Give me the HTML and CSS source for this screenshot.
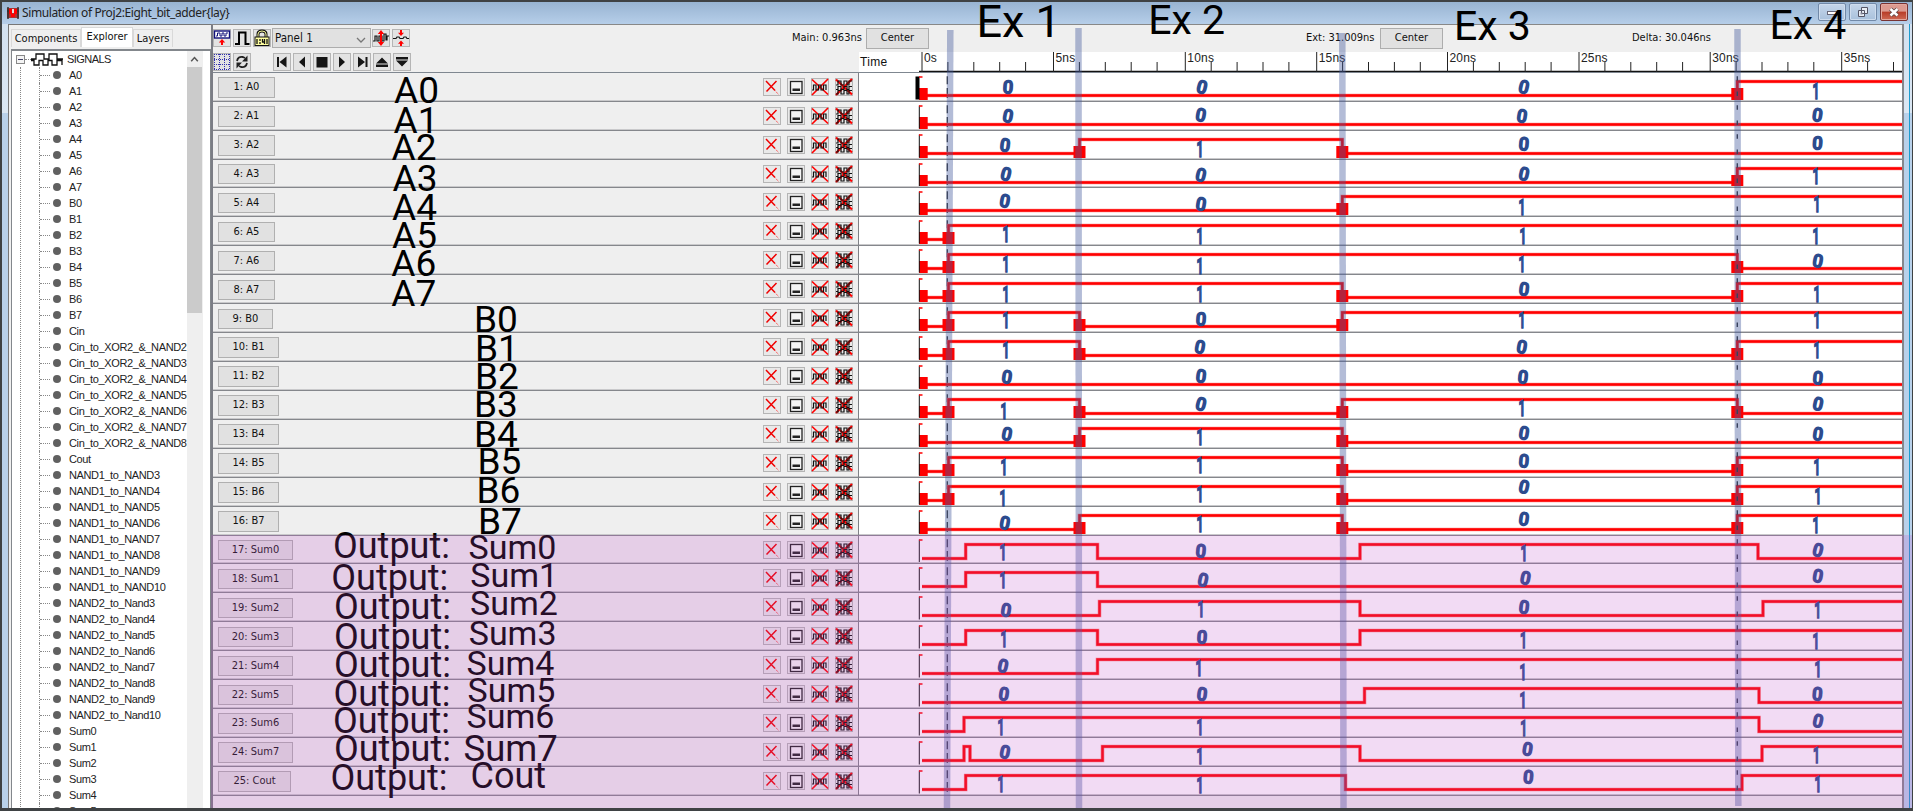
FILE: index.html
```html
<!DOCTYPE html>
<html lang="en">
<head>
<meta charset="utf-8">
<title>Simulation of Proj2:Eight_bit_adder{lay}</title>
<link rel="stylesheet" href="styles.css">
</head>
<body>
<svg class="defs" width="0" height="0">
  <symbol id="add-panel" viewBox="0 0 18 18"><rect x="1.500" y="2" width="15" height="7" fill="#fff" stroke="#10107a" stroke-width="1.4"/><path d="M3 7h1.500V4H7v3h2V4h2v3h2V4h2" fill="none" stroke="#10107a"/><path d="M9 10l3.200 3.500H10V16H8v-2.500H5.800z" fill="#f00"/></symbol>
  <symbol id="pulse" viewBox="0 0 18 18"><path d="M2 15h4V3.500h6.500V15h4" fill="none" stroke="#000" stroke-width="2"/></symbol>
  <symbol id="lock" viewBox="0 0 18 18"><path d="M5 9V5q0-3 4-3t4 3v4" fill="none" stroke="#111" stroke-width="3"/><path d="M5 8.500V5q0-3 4-3t4 3v3.500" fill="none" stroke="#ffffa0" stroke-width="1"/><rect x="2" y="8" width="14" height="8.500" fill="#ffffa0" stroke="#111"/><path d="M4 10v5M7 10v2M7 13v2M9.500 10v3h2M11.500 10v5M14 10v5" stroke="#111" stroke-width="1.300" fill="none"/></symbol>
  <symbol id="grow" viewBox="0 0 18 18"><path d="M1 12h2V7h2v5h2V7h3v5h2V5h2v6h1V7h2" fill="none" stroke="#111" stroke-width="1.200"/><path d="M9 1l3.200 4H10v8h2.200L9 17l-3.200-4H8V5H5.800z" fill="#f00"/></symbol>
  <symbol id="shrink" viewBox="0 0 18 18"><path d="M1 9.500h3l1-1.500h2l1 1.500h3l1-1.500h2l1 1.500h2" fill="none" stroke="#111" stroke-width="1.200"/><path d="M9 7L6 3.800h2V1h2v2.800h2zM9 11.500l3 3.200h-2V17H8v-2.300H6z" fill="#f00"/></symbol>
  <symbol id="grid" viewBox="0 0 18 18"><path d="M1 1.500h16M1 6.500h16M1 11.500h16M1 16.500h16M1.500 1v16M6.500 1v16M11.500 1v16M16.500 1v16" stroke="#3030b0" stroke-dasharray="1 1" fill="none"/></symbol>
  <symbol id="refresh" viewBox="0 0 18 18"><path d="M4 8q1-5 6-4l2 1M14 10q-1 5-6 4l-2-1" fill="none" stroke="#222" stroke-width="1.800"/><path d="M14.500 2.500v6H9zM3.500 15.500v-6H9z" fill="#222"/></symbol>
  <symbol id="first" viewBox="0 0 18 18"><path d="M4 4h2v10H4zM13.500 3.500v11L6.500 9z" fill="#151515"/></symbol>
  <symbol id="back" viewBox="0 0 18 18"><path d="M12 3.500v11L6 9z" fill="#151515"/></symbol>
  <symbol id="stop" viewBox="0 0 18 18"><rect x="3.500" y="4" width="11" height="10.500" fill="#151515"/></symbol>
  <symbol id="play" viewBox="0 0 18 18"><path d="M6 3.500v11L12 9z" fill="#151515"/></symbol>
  <symbol id="last" viewBox="0 0 18 18"><path d="M12.500 4h2v10h-2zM5 3.500v11L12 9z" fill="#151515"/></symbol>
  <symbol id="up" viewBox="0 0 18 18"><path d="M9 4.500l6 6H3zM3 11.500h12v2.500H3z" fill="#151515"/></symbol>
  <symbol id="down" viewBox="0 0 18 18"><path d="M9 13.500l-6-6h12zM3 4h12v2.500H3z" fill="#151515"/></symbol>
  <symbol id="close" viewBox="0 0 18 18"><path d="M3 3l9 9.500M13.500 3L3.500 13.500" stroke="#f00000" stroke-width="1.500" fill="none"/><path d="M12 12.500l3.500 4" stroke="#f33" stroke-dasharray="1 1" fill="none"/></symbol>
  <symbol id="minimize" viewBox="0 0 18 18"><rect x="3.500" y="3.500" width="11.500" height="12" fill="#f4f4f4" stroke="#222" stroke-width="1.300"/><rect x="5.500" y="10.500" width="7.500" height="2.500" fill="#222"/></symbol>
  <symbol id="remove" viewBox="0 0 18 18"><path d="M1 1.500l16 15M17 1L1 17" stroke="#f00" stroke-width="1.700"/><path d="M1 12h1.500V7H5v5h2.500V7H10v5h2.500V7H15v5" fill="none" stroke="#111" stroke-width="1.200"/></symbol>
  <symbol id="remove-all" viewBox="0 0 18 18"><path d="M1 1.500l16 15M17 1L1 17" stroke="#f00" stroke-width="2.200"/><path d="M1 7h2V3h3v4h3V3h3v4h2V3h3M1 11.500h2v-3h3v3h3v-3h3v3h2v-3h3M1 16h2v-3.500h3V16h3v-3.500h3V16h2v-3.500h3" fill="none" stroke="#111" stroke-width="1.200"/></symbol>
</svg>

<div class="window">
  <header class="titlebar">
    <svg class="app-icon" viewBox="0 0 12 12"><path d="M0 1h12v10H0z" fill="#a33"/><path d="M1 0v12M11 0v12M0 4h2M10 4h2" stroke="#333" stroke-width="1.500"/><path d="M2 2h3v5H2zM7 2h3v5H7zM4 7h4v3H4z" fill="#f00"/><path d="M5 2h2v4H5z" fill="#ddd"/></svg>
    <h1 class="title">Simulation of Proj2:Eight_bit_adder{lay}</h1>
    <div class="controls">
      <span class="control"><svg viewBox="0 0 26 16"><rect x="8.500" y="7.500" width="9" height="3" fill="#fff" stroke="#667"/></svg></span>
      <span class="control"><svg viewBox="0 0 26 16"><path d="M11.500 3.500h6v6h-6zM8.500 6.500h6v6h-6z" fill="#e9eef5" stroke="#556"/><path d="M10.500 8.500h2v2h-2z" fill="#889"/></svg></span>
      <span class="control control-close"><svg viewBox="0 0 26 16"><path d="M9.500 5l7 6.500M16.500 5l-7 6.500" stroke="#544" stroke-width="4"/><path d="M9.500 5l7 6.500M16.500 5l-7 6.500" stroke="#fff" stroke-width="2.500"/></svg></span>
    </div>
  </header>

  <div class="frame">
    <aside class="sidebar">
      <nav class="tabs"><span class="tab tab-components">Components</span><span class="tab tab-active">Explorer</span><span class="tab tab-layers">Layers</span></nav>
      <div class="tree">
        <div class="tree-items">
          <div class="tree-root"><span class="toggle"></span><span class="stub"></span><svg class="signals-icon" viewBox="0 0 32 13"><path d="M0 6h5V1h8v5h5V1h8v5h6M0 7.500h3V12h5V7.500h4V12h5V7.500h4V12h5V7.500h5V12" fill="none" stroke="#111" stroke-width="1.300"/></svg><span>SIGNALS</span></div>
          <div class="tree-list" id="tree"></div>
        </div>
        <div class="scrollbar"><svg class="scroll-arrow" viewBox="0 0 15 17"><path d="M4 11l3.500-4 3.500 4" fill="none" stroke="#555" stroke-width="1.600"/></svg><div class="thumb"></div></div>
      </div>
    </aside>

    <main class="main">
      <div class="toolbar">
        <div class="tools">
          <div class="tool-row">
            <svg class="tool"><use href="#add-panel"/></svg><svg class="tool"><use href="#pulse"/></svg><svg class="tool"><use href="#lock"/></svg>
            <span class="select">Panel 1<svg class="chevron" viewBox="0 0 10 6"><path d="M1 1l4 4 4-4" fill="none" stroke="#777" stroke-width="1.300"/></svg></span>
            <svg class="tool"><use href="#grow"/></svg><svg class="tool"><use href="#shrink"/></svg>
          </div>
          <div class="tool-row">
            <svg class="tool"><use href="#grid"/></svg><svg class="tool tool-refresh"><use href="#refresh"/></svg>
            <svg class="tool"><use href="#first"/></svg><svg class="tool"><use href="#back"/></svg><svg class="tool"><use href="#stop"/></svg><svg class="tool"><use href="#play"/></svg><svg class="tool"><use href="#last"/></svg><svg class="tool"><use href="#up"/></svg><svg class="tool"><use href="#down"/></svg>
          </div>
        </div>
        <div class="timing">
          <div class="readouts">
            <span class="readout readout-main">Main: 0.963ns</span><span class="center-btn">Center</span>
            <span class="readout readout-ext">Ext: 31.009ns</span><span class="center-btn">Center</span>
            <span class="readout readout-delta">Delta: 30.046ns</span>
          </div>
          <div class="ruler"><span class="ruler-label">Time</span><svg class="ticks" id="ticks" width="984" height="20"></svg></div>
        </div>
      </div>
      <div class="rows" id="rows"></div>
      <div class="rest"></div>
    </main>
    <div class="edge"></div>
  </div>
</div>

<svg class="notes" id="notes" width="1913" height="811"></svg>
<div class="highlight"></div>
<script src="script.js"></script>
</body>
</html>
```
FILE: styles.css
```css
* { box-sizing: border-box; }
body { margin: 0; width: 1913px; height: 811px; overflow: hidden; background: #3f4244; font-family: "DejaVu Sans Condensed", "DejaVu Sans", sans-serif; font-stretch: condensed; font-size: 11px; color: #111; position: relative; }
.defs { position: absolute; }
.window { margin: 0 1px 0 2px; padding-top: 2px; height: 808px; display: flex; flex-direction: column; }
.titlebar { flex: none; height: 22px; display: flex; align-items: center; padding: 0 4px 0 5px; background: linear-gradient(#98b4d2, #b6cee9); }
.app-icon { width: 12px; height: 12px; margin-right: 3px; }
.title { margin: 0; font: 400 12px/18px "Noto Sans", sans-serif; color: #222; letter-spacing: -0.39px; }
.controls { margin-left: auto; display: flex; gap: 3px; height: 18px; align-self: flex-start; margin-top: 1px; }
.control { width: 28px; border: 1px solid #7189a8; border-radius: 2px; background: linear-gradient(#c5d6ea, #a9c1dc); box-shadow: inset 0 0 0 1px #cfddee; }
.control svg { display: block; width: 26px; height: 16px; }
.control-close { border-color: #733; background: linear-gradient(#dc9a90 45%, #b83c28 50%, #cf6a55); box-shadow: inset 0 0 0 1px #e3a89e; }
.frame { flex: 1; min-height: 0; display: flex; background: linear-gradient(#d3e1f0, #dbe7f3 89px, #b9d1ea 89px); padding-left: 6px; }
.sidebar { flex: none; width: 203px; border-left: 1px solid #777; border-top: 1px solid #777; background: #efefef; display: flex; flex-direction: column; padding: 2px 6px 0 2px; }
.tabs { height: 20px; display: flex; align-items: flex-end; }
.tab { height: 18px; border: 1px solid #d9d9d9; border-bottom: 0; line-height: 18px; text-align: center; white-space: nowrap; }
.tab-components { width: 70px; }
.tab-active { width: 52px; height: 20px; background: #fff; }
.tab-layers { width: 40px; }
.tree { margin-top: 2px; flex: 1; min-height: 0; border: 1px solid #83878c; border-width: 2px 1px 0 1px; background: #fff; display: flex; overflow: hidden; margin-right: -6px; }
.tree-items { width: 175px; overflow: hidden; font: 11px/16px "Liberation Sans", sans-serif; letter-spacing: -0.38px; color: #222; }
.tree-root { height: 16px; display: flex; align-items: center; padding-left: 4px; letter-spacing: -0.55px; }
.toggle { width: 9px; height: 9px; border: 1px solid #888; background: linear-gradient(#446, #446) center / 5px 1px no-repeat #f4f4f4; }
.stub { width: 6px; border-top: 1px dotted #888; }
.signals-icon { width: 32px; height: 13px; margin-right: 4px; }
.tree-list { margin-left: 8px; border-left: 1px dotted #888; padding-left: 18px; }
.tree-item { height: 16px; display: flex; align-items: center; border-left: 1px dotted #888; white-space: nowrap; }
.tree-item::before { content: ""; width: 10px; border-top: 1px dotted #888; }
.dot { flex: none; width: 8px; height: 8px; border-radius: 50%; background: #606060; margin: 0 8px 0 3px; }
.scrollbar { flex: none; width: 16px; background: #efefef; }
.scroll-arrow { display: block; width: 15px; height: 16px; }
.thumb { width: 15px; height: 246px; background: #cbcbcb; }
.main { width: 1692px; min-width: 0; border-top: 1px solid #888; border-left: 2px solid #7b7d85; background: #efefef; display: flex; flex-direction: column; }
.toolbar { height: 47.800px; flex: none; display: flex; border-bottom: 1px solid #7f8790; }
.tools { width: 450px; padding: 4px 0 0; }
.tool-row { display: flex; gap: 2px; height: 24px; }
.tool { flex: none; width: 18px; height: 18px; background: #e3e3e3; box-shadow: inset 0 0 0 1px #b5b5b5; }
.tool-refresh { margin-right: 20px; }
.select { width: 99px; height: 20px; margin: -1px -1px 0; border: 1px solid #adadad; background: #e1e1e1; padding-left: 2px; font-size: 11.500px; display: flex; align-items: center; }
.chevron { width: 10px; height: 6px; margin-left: auto; margin-right: 4px; margin-top: 3px; }
.timing { flex: 1; display: flex; flex-direction: column; }
.readouts { height: 27px; padding-top: 3px; display: flex; }
.readout { line-height: 20px; white-space: nowrap; }
.readout-main { margin-left: 131px; width: 74px; }
.readout-ext { margin-left: 377px; width: 74px; }
.readout-delta { margin-left: 189px; }
.center-btn { width: 63px; height: 21px; border: 1px solid #adadad; background: #e1e1e1; line-height: 18px; text-align: center; }
.ruler { height: 20px; margin-left: 198px; background: #fff; display: flex; font-family: "Liberation Sans", sans-serif; font-size: 12px; }
.ruler-label { width: 60px; padding-left: 1px; line-height: 20px; letter-spacing: 0.300px; }
.ticks { flex: none; overflow: hidden; letter-spacing: 0.200px; }
.rows { flex: none; display: flex; flex-direction: column; }
.row { height: 28.930px; display: flex; border-bottom: 1px solid #85878c; box-shadow: inset 0 -1px #c9c9cb; }
.row-head { flex: none; width: 646px; border-right: 1px solid #7f8186; display: flex; align-items: flex-start; padding: 4.400px 5px 0 5px; gap: 6px; }
.label { height: 20.500px; border: 1px solid #b0b0b0; background: #e1e1e1; line-height: 18px; text-align: center; margin-right: auto; white-space: nowrap; }
.row-tool { flex: none; width: 18px; height: 18px; background: #e9e9e9; box-shadow: inset 0 0 0 1px #b5b5b5; margin-top: 0.600px; }
.wave { display: block; flex: none; background: #fff; height: 26.900px; overflow: hidden; }
.rest { flex: 1; }
.edge { width: 8px; border-left: 2px solid #85888d; border-right: 1px solid #1c9ccf; margin-left: -1px; }
.notes { position: absolute; left: 0; top: 0; font-family: Roboto, sans-serif; font-stretch: normal; }
.ink { fill: #2c4b8e; stroke: #2c4b8e; font-weight: 500; text-anchor: middle; }
.band { stroke: #40589a; stroke-opacity: 0.400; stroke-width: 6.500; }
.highlight { position: absolute; left: 211px; top: 535px; width: 1701px; height: 273px; background: rgba(190, 75, 200, 0.200); }
```
FILE: script.js
```js
const range = (n, f) => Array.from({ length: n }, (_, i) => f(i));

// Explorer tree
const signals = [
  ...range(8, i => 'A' + i), ...range(8, i => 'B' + i), 'Cin',
  ...range(7, i => 'Cin_to_XOR2_&amp;_NAND' + (i + 2)), 'Cout',
  ...range(8, i => 'NAND1_to_NAND' + (i + 3)),
  ...range(8, i => 'NAND2_to_Nand' + (i + 3)), ...range(6, i => 'Sum' + i)
];
document.getElementById('tree').innerHTML = signals
  .map(s => `<div class="tree-item"><span class="dot"></span>${s}</div>`).join('');

// Time ruler
const major = [3, 134.5, 266.3, 397.7, 528.500, 660, 791.200, 922.700];
document.getElementById('ticks').innerHTML = '<path d="M0 19.500H984" stroke="#111" stroke-width="1.500"/>' +
  major.map((x, i) => `<path d="M${x} 0V20${range(4, k => `M${x + 25.900 * (k + 1)} 10V20`).join('')}" stroke="#222"/>` +
    `<text x="${x + 2}" y="10" font-size="12" fill="#222">${i ? i * 5 + 'ns' : '0s'}</text>`).join('');

// Signal rows: x positions of every level change; inputs also carry a stimulus handle at each one
const [A, B, C, D] = [948.500, 1079.500, 1342.300, 1737.300];
const traces = [
  ['A0', [D]], ['A1', []], ['A2', [B, C]], ['A3', [D]], ['A4', [C]], ['A5', [A]], ['A6', [A, D]], ['A7', [A, C, D]],
  ['B0', [A, B, C]], ['B1', [A, B, D]], ['B2', []], ['B3', [A, B, C, D]], ['B4', [B, C]], ['B5', [A, C, D]],
  ['B6', [A, C, D]], ['B7', [B, C, D]],
  ['Sum0', [965.700, 1097.500, 1360, 1758]], ['Sum1', [965.700, 1097.500]], ['Sum2', [1099.500, 1360, 1763]],
  ['Sum3', [965.700, 1097.500, 1360]], ['Sum4', [1097.500]], ['Sum5', [1364.500, 1759]], ['Sum6', [964, 1759]],
  ['Sum7', [964, 970, 1102.500, 1360, 1762]], ['Cout', [965.700, 1345.500, 1742]]
];
const left = 859, low = 22.500, high = 8.500;
const rowWave = (edges, input, first) => {
  let y = low, d = `M${922 - left} ${y}`;
  for (const x of edges) { y = y === low ? high : low; d += `H${x - left}V${y}`; }
  d += 'H1044';
  const handle = (x, w) => `<rect x="${x - left}" y="15" width="${w}" height="12" fill="#f00"/>`;
  return `<svg class="wave" width="1044" height="27">` +
    `<path d="M88.300 3.300v8M88.300 15v10" stroke="#333" stroke-width="1.300"/>` +
    `<path d="${d}" fill="none" stroke="#f88" stroke-width="3.600"/><path d="${d}" fill="none" stroke="#f00" stroke-width="2.400"/>` +
    (input ? handle(919, 8.700) + edges.map(x => handle(x - 6, 12)).join('') : '') +
    `<path d="M878.300 3.300v4.500M878.300 18.500v4.500" stroke="#333" stroke-width="1.400"/>` +
    (first ? '<path d="M58.500 3.500v23" stroke="#000" stroke-width="4"/>' : '<path d="M60.300 3.500v23" stroke="#111"/>') +
    `<path d="M60 4h3.500" stroke="#f00" stroke-width="1.500"/></svg>`;
};
const labelWidth = i => i < 8 ? 57 : i === 8 ? 55 : i < 16 ? 61 : i < 24 ? 75 : 73;
document.getElementById('rows').innerHTML = traces.map(([name, edges], i) =>
  `<div class="row"><div class="row-head"><span class="label" style="width:${labelWidth(i)}px">${i + 1}: ${name}</span>` +
  ['close', 'minimize', 'remove', 'remove-all'].map(id => `<svg class="row-tool"><use href="#${id}"/></svg>`).join('') +
  `</div>${rowWave(edges, i < 16, i === 0)}</div>`).join('');

// Typed notes: text, x, baseline, size
const notes = [
  ['Ex 1', 976.500, 36.700, 45], ['Ex 2', 1148.300, 33.700, 41], ['Ex 3', 1454, 40, 41], ['Ex 4', 1769.500, 38.700, 41],
  ...[[394, 102.700], [393.500, 132.700], [391.500, 159.700], [392.500, 190.700], [392, 219.700], [392, 247.700], [391.300, 275.700], [391.300, 305.700]]
    .map(([x, y], i) => ['A' + i, x, y, 37]),
  ...[[474, 332], [475, 361], [475, 389], [474, 417], [474, 447], [477.500, 474], [476.500, 503], [478, 533.500]]
    .map(([x, y], i) => ['B' + i, x, y, 37]),
  ...[[333, 558], [331.300, 590], [334, 619], [334, 649], [334, 676.700], [333.500, 705.700], [333, 733], [334, 761], [330.500, 789.700]]
    .map(([x, y]) => ['Output:', x, y, 36]),
  ...[[468.500, 558.700], [470.300, 587.300], [470, 615], [468.700, 645], [466.500, 674.700], [467.500, 701.700], [466.500, 728]]
    .map(([x, y], i) => ['Sum' + i, x, y, 34]),
  ['Sum7', 463.500, 760.700, 36.500], ['Cout', 470.500, 787.700, 36]
];

// Pen marks per example column: [bit, x, y of centre]
const ink = [
  '0 1008 87,0 1008 116,0 1005 145,0 1006 174,0 1005 201,1 1007 234,1 1007 264,1 1007 294,1 1007 320,1 1007 350,0 1007 377,1 1005 411,0 1007 434,1 1005 467,1 1004 498,0 1005 523,1 1004 552,1 1004 580,0 1006 610,1 1005 639,0 1003 666,0 1004 694,1 1002 727,0 1005 752,1 1002 784',
  '0 1202 87,0 1201 115,1 1201 149,0 1201 175,0 1201 204,1 1201 236,1 1201 266,1 1201 294,0 1201 319,0 1200 347,0 1201 376,0 1201 404,1 1201 437,1 1201 465,1 1201 494,1 1201 524,0 1201 551,0 1203 580,1 1202 609,0 1202 637,1 1200 668,0 1202 694,1 1201 727,1 1201 756,1 1201 785',
  '0 1524 87,0 1522 116,0 1524 144,0 1524 174,1 1523 207,1 1524 236,1 1523 264,0 1524 289,1 1523 320,0 1522 347,0 1523 377,1 1523 408,0 1524 433,0 1524 461,0 1524 487,0 1524 519,1 1525 553,0 1525.500 578,0 1524 607,1 1524.500 640,1 1524 672,1 1524 700,1 1524.700 728,0 1527.500 749,0 1528.500 777',
  '1 1817 91,0 1817.500 115,0 1817.500 143,1 1817 176,1 1818 204,1 1817 236,0 1818 261,1 1818 294,1 1818 320,1 1818 350,0 1818 378,0 1818 404,0 1818 434,1 1818 467,1 1819 496,1 1817 525,0 1818 550,0 1818 576,1 1818.700 610,1 1817 641,1 1819 669,0 1817.500 694,0 1818 721,1 1817.500 755,1 1819 784'
].flatMap(c => c.split(',').map(m => m.split(' ')));

document.getElementById('notes').innerHTML =
  [[950.300, 30, 947, 808], [1078.500, 28, 1079, 808], [1342.300, 33, 1343.500, 808], [1737.500, 29, 1738.300, 806]]
    .map(([x1, y1, x2, y2]) => `<path class="band" d="M${x1} ${y1}L${x2} ${y2}"/>`).join('') +
  notes.map(([t, x, y, s]) => `<text x="${x}" y="${y}" font-size="${s}">${t}</text>`).join('') +
  ink.map(([bit, x, y], i) => bit === '0'
    ? `<text class="ink" font-size="18" stroke-width="1.500" transform="translate(${x} ${y}) rotate(${4 + i * 7 % 11})" y="6.300">0</text>`
    : `<text class="ink" font-size="22" stroke-width="1.600" transform="translate(${x} ${y}) scale(.55 1)" x="-2" y="7.800">1</text>`).join('');
```
